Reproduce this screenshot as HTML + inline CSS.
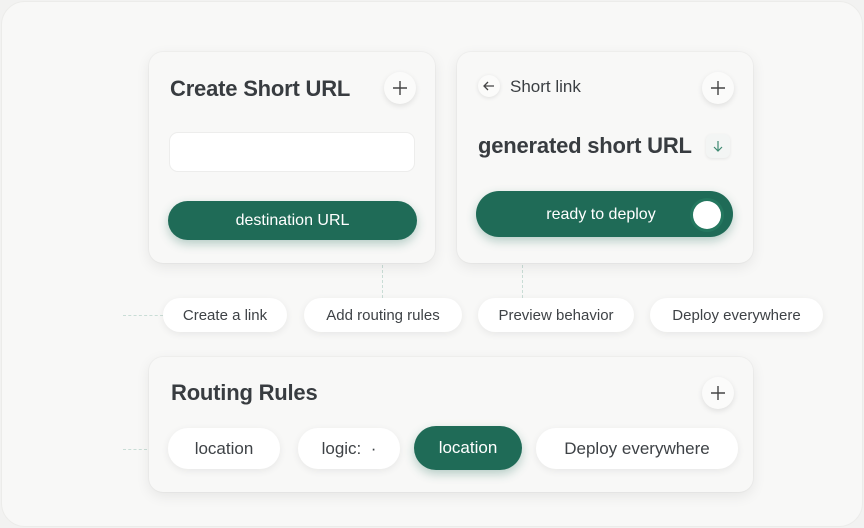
<!DOCTYPE html>
<html><head><meta charset="utf-8"><style>
*{box-sizing:border-box;margin:0;padding:0}
body{width:864px;height:528px;background:#f2f2f1;font-family:"Liberation Sans",sans-serif;color:#2f3337;position:relative;overflow:hidden}
.frame{position:absolute;left:1px;top:1px;width:862px;height:526px;border-radius:24px;background:#f8f8f7;border:1px solid #ececea}
.card{position:absolute;background:#f8f8f7;border-radius:14px;box-shadow:0 4px 14px rgba(0,0,0,.08),0 0 0 1px rgba(0,0,0,.025)}
.abs{position:absolute}
.plus{position:absolute;width:32px;height:32px;border-radius:50%;background:#fbfbfa;box-shadow:0 2px 6px rgba(0,0,0,.1);display:flex;align-items:center;justify-content:center}
.title{position:absolute;font-size:22px;font-weight:bold;letter-spacing:-.2px;color:#383c40;white-space:nowrap;line-height:1}
.green{background:#1f6b57;color:#fff;box-shadow:0 4px 10px rgba(31,107,87,.3)}
.pill{position:absolute;background:#fff;border-radius:20px;box-shadow:0 2px 8px rgba(0,0,0,.07);display:flex;align-items:center;justify-content:center;font-size:15px;color:#3e4246;white-space:nowrap}
.dv{position:absolute;border-left:1px dashed #c9ddd6}
.dh{position:absolute;border-top:1px dashed #c9ddd6}
</style></head><body>
<div class="frame"></div>

<div class="dv" style="left:382px;top:265px;height:33px"></div>
<div class="dv" style="left:522px;top:265px;height:33px"></div>
<div class="dh" style="left:123px;top:315px;width:40px"></div>
<div class="dh" style="left:123px;top:449px;width:45px"></div>
<div class="dh" style="left:280px;top:449px;width:18px"></div>
<div class="dh" style="left:400px;top:449px;width:14px"></div>

<div class="card" style="left:149px;top:52px;width:286px;height:211px">
  <div class="title" style="left:21px;top:26px">Create Short URL</div>
  <div class="plus" style="left:235px;top:20px"><svg width="16" height="16"><path d="M8 1v14M1 8h14" stroke="#444" stroke-width="1.4"/></svg></div>
  <div class="abs" style="left:20px;top:80px;width:246px;height:40px;background:#fff;border-radius:9px;border:1px solid #ededec"></div>
  <div class="abs green" style="left:19px;top:149px;width:249px;height:39px;border-radius:20px;display:flex;align-items:center;justify-content:center;font-size:16px">destination URL</div>
</div>

<div class="card" style="left:457px;top:52px;width:296px;height:211px">
  <div class="plus" style="left:21px;top:23px;width:22px;height:22px;box-shadow:0 1px 4px rgba(0,0,0,.1)"><svg width="12" height="10"><path d="M11 5H1M5 1L1 5l4 4" stroke="#444" stroke-width="1.3" fill="none"/></svg></div>
  <div class="abs" style="left:53px;top:25px;font-size:17px;color:#3a3e42">Short link</div>
  <div class="plus" style="left:245px;top:20px"><svg width="16" height="16"><path d="M8 1v14M1 8h14" stroke="#444" stroke-width="1.4"/></svg></div>
  <div class="title" style="left:21px;top:83px">generated short URL</div>
  <div class="abs" style="left:249px;top:82px;width:24px;height:24px;border-radius:6px;background:#f3f5f4;box-shadow:0 1px 3px rgba(0,0,0,.08);display:flex;align-items:center;justify-content:center"><svg width="10" height="12"><path d="M5 1v10M1 7l4 4 4-4" stroke="#3f8a72" stroke-width="1.2" fill="none"/></svg></div>
  <div class="abs green" style="left:19px;top:139px;width:257px;height:46px;border-radius:23px;font-size:16px">
    <div class="abs" style="left:0;width:250px;top:15px;text-align:center">ready to deploy</div>
    <div class="abs" style="left:217px;top:10px;width:28px;height:28px;border-radius:50%;background:#fff;box-shadow:0 0 0 3px #24775f"></div>
  </div>
</div>

<div class="pill" style="left:163px;top:298px;width:124px;height:34px">Create a link</div>
<div class="pill" style="left:304px;top:298px;width:158px;height:34px">Add routing rules</div>
<div class="pill" style="left:478px;top:298px;width:156px;height:34px">Preview behavior</div>
<div class="pill" style="left:650px;top:298px;width:173px;height:34px">Deploy everywhere</div>

<div class="card" style="left:149px;top:357px;width:604px;height:135px">
  <div class="title" style="left:22px;top:25px">Routing Rules</div>
  <div class="plus" style="left:553px;top:20px"><svg width="16" height="16"><path d="M8 1v14M1 8h14" stroke="#444" stroke-width="1.4"/></svg></div>
</div>
<div class="pill" style="left:168px;top:428px;width:112px;height:41px;font-size:17px">location</div>
<div class="pill" style="left:298px;top:428px;width:102px;height:41px;font-size:17px">logic:&nbsp;&nbsp;·</div>
<div class="pill" style="left:414px;top:426px;width:108px;height:44px;font-size:17px;border-radius:22px;background:#1f6b57;color:#fff;box-shadow:0 4px 10px rgba(31,107,87,.3)">location</div>
<div class="pill" style="left:536px;top:428px;width:202px;height:41px;font-size:17px">Deploy everywhere</div>
</body></html>
